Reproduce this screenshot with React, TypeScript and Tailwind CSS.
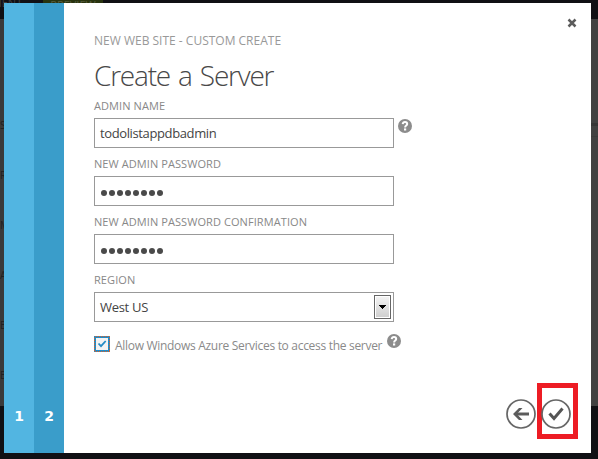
import React from "react";

function HelpIcon({ className = "" }: { className?: string }) {
  return (
    <svg className={`h-[14px] w-[14px] shrink-0 ${className}`} viewBox="0 0 14 14" fill="none">
      <circle cx="7" cy="7" r="7" fill="#8c8c8c" />
      <path d="M4.7 5.200C4.900 3.700 5.700 3.100 7 3.100c1.400 0 2.200.7 2.200 1.900C9.200 6.600 7.100 6.500 7.100 8.500" stroke="#fff" strokeWidth="2" />
      <rect x="6" y="9.400" width="2.200" height="2.100" fill="#fff" />
    </svg>
  );
}

function Label({ children }: { children: string }) {
  return (
    <div className="flex h-[24px] items-center whitespace-nowrap text-[11px] font-medium leading-[12px] tracking-[0.08px] text-[#888]">
      <span>{children}</span>
    </div>
  );
}

function Field({ children }: { children: React.ReactNode }) {
  return (
    <div className="flex h-[30px] w-[300px] items-center border border-[#999] bg-white pl-[5px] text-[#444]">
      {children}
    </div>
  );
}

function PasswordDots() {
  return (
    <div className="ml-[1px] mt-[3px] flex gap-[2px]">
      {Array.from({ length: 8 }, (_, i) => (
        <span key={i} className="h-[6px] w-[6px] rounded-full bg-[#4a4a4a]" />
      ))}
    </div>
  );
}

function CheckedBox() {
  return (
    <svg className="mt-[2px] h-[16px] w-[16px] shrink-0" viewBox="0 0 16 16" fill="none">
      <rect width="16" height="16" fill="#248bc5" />
      <rect x="0.500" y="0.500" width="15" height="15" stroke="#d9622b" strokeDasharray="1 1" shapeRendering="crispEdges" />
      <rect x="2" y="2" width="12" height="12" fill="#f3f3f3" />
      <path d="M4.500 7.500L7 10.200L11.700 5" stroke="#248bc5" strokeWidth="1.800" />
    </svg>
  );
}

const sideLabels = [
  { text: "S", gap: "mt-[99px]" },
  { text: "R", gap: "mt-[36px]" },
  { text: "M", gap: "mt-[36px]" },
  { text: "A", gap: "mt-[36px]" },
  { text: "E", gap: "mt-[36px]" },
  { text: "ES", gap: "mt-[36px]" },
];

function Backdrop() {
  return (
    <div className="flex h-full flex-col bg-[#101014]">
      <div className="flex h-[19px] shrink-0 overflow-hidden text-[11px] leading-[6px] text-[#3d3d40]">
        <span className="w-[43px] whitespace-nowrap indent-[-14px]">CLIENT</span>
        <span className="h-[4px] w-[60px] overflow-hidden bg-[#28330f] text-center leading-[9px] text-[#555b3c]">PREVIEW</span>
      </div>
      <div className="flex h-[387px] shrink-0 justify-between bg-[#414141]">
        <div className="flex w-[4px] flex-col overflow-hidden bg-[#3a3a3a] text-[10px] leading-[14px] text-[#202020]">
          {sideLabels.map((item) => (
            <span key={item.text} className={`flex ${item.gap}`}>{item.text}</span>
          ))}
        </div>
        <div className="w-[7px] pt-[104px]">
          <div className="h-[3px] bg-[#363636]" />
          <div className="mt-[10px] h-px bg-[#3b3b3b]" />
        </div>
      </div>
    </div>
  );
}

export default function App() {
  return (
    <div className="relative h-[459px] w-[598px] overflow-hidden font-['Open_Sans','Noto_Sans',sans-serif]">
      <Backdrop />
      <div className="absolute left-[4px] top-[3px] flex h-[450px] w-[587px] bg-white">
        <div className="flex w-[60px] shrink-0 text-center font-['DejaVu_Sans',sans-serif] text-[14px] font-bold leading-none text-white">
          <div className="w-[30px] bg-[#52b5e1] pt-[406px]">1</div>
          <div className="w-[30px] bg-[#3a9dca] pt-[406px]">2</div>
        </div>
        <div className="flex grow flex-col pl-[30px]">
          <div className="flex justify-between pr-[14px]">
            <div className="mt-[31px] whitespace-nowrap text-[12px] leading-[14px] text-[#999]">NEW WEB SITE - CUSTOM CREATE</div>
            <svg className="mt-[15px] h-[10px] w-[10px]" viewBox="0 0 10 10" fill="none">
              <path d="M1.500 1.500L8.500 8.500M8.500 1.500L1.500 8.500" stroke="#5c5c5c" strokeWidth="2.500" />
            </svg>
          </div>
          <h1 className="mt-[8px] h-[38px] whitespace-nowrap text-[28px] font-light leading-[38px] tracking-[-1.200px] text-[#484848] [word-spacing:2px]">Create a Server</h1>
          <Label>ADMIN NAME</Label>
          <div className="flex items-start">
            <Field><span className="text-[13px] leading-none tracking-[-0.38px]">todolistappdbadmin</span></Field>
            <HelpIcon className="ml-[4px] mt-[1px]" />
          </div>
          <div className="h-[4px]" />
          <Label>NEW ADMIN PASSWORD</Label>
          <Field><PasswordDots /></Field>
          <div className="h-[4px]" />
          <Label>NEW ADMIN PASSWORD CONFIRMATION</Label>
          <Field><PasswordDots /></Field>
          <div className="h-[4px]" />
          <Label>REGION</Label>
          <Field>
            <span className="text-[13px] leading-none tracking-[-0.3px]">West US</span>
            <span className="ml-auto mr-[2px] flex h-[24px] w-[17px] border border-[#666] bg-white p-px">
              <span className="flex grow items-center justify-center bg-linear-to-b from-[#f3f3f3] to-[#cfcfcf]">
                <svg className="h-[4px] w-[7px]" viewBox="0 0 7 4" shapeRendering="crispEdges"><path d="M0 0H7V1H6V2H5V3H4V4H3V3H2V2H1V1H0Z" fill="#000" /></svg>
              </span>
            </span>
          </Field>
          <div className="mt-[12px] flex h-[20px] items-start">
            <CheckedBox />
            <span className="ml-[5px] mt-[4px] w-[267px] whitespace-nowrap text-[12px] leading-[16px] tracking-[-0.3px] text-[#8a8a8a]">Allow Windows Azure Services to access the server</span>
            <HelpIcon className="ml-[5px]" />
          </div>
          <div className="mt-[29px] flex h-[56px] shrink-0 items-center justify-end pr-[13px]">
            <svg className="mr-px mt-[6px] h-[30px] w-[30px]" viewBox="0 0 30 30" fill="none">
              <circle cx="15" cy="15" r="14" stroke="#666" strokeWidth="1.700" />
              <path d="M23 15H9" stroke="#5c5c5c" strokeWidth="3" />
              <path d="M16.500 9H13L7 15L13 21H16.500L10.800 15Z" fill="#5c5c5c" />
            </svg>
            <div className="flex h-[56px] w-[41px] items-center justify-center border-5 border-[#ed1c24]">
              <svg className="mr-[3px] mt-[6px] h-[30px] w-[30px] shrink-0" viewBox="0 0 30 30" fill="none">
                <circle cx="15" cy="15" r="14" stroke="#666" strokeWidth="1.700" />
                <path d="M8.500 14.500L13 19.500L21.500 9.500" stroke="#555" strokeWidth="3" />
              </svg>
            </div>
          </div>
        </div>
      </div>
    </div>
  );
}
